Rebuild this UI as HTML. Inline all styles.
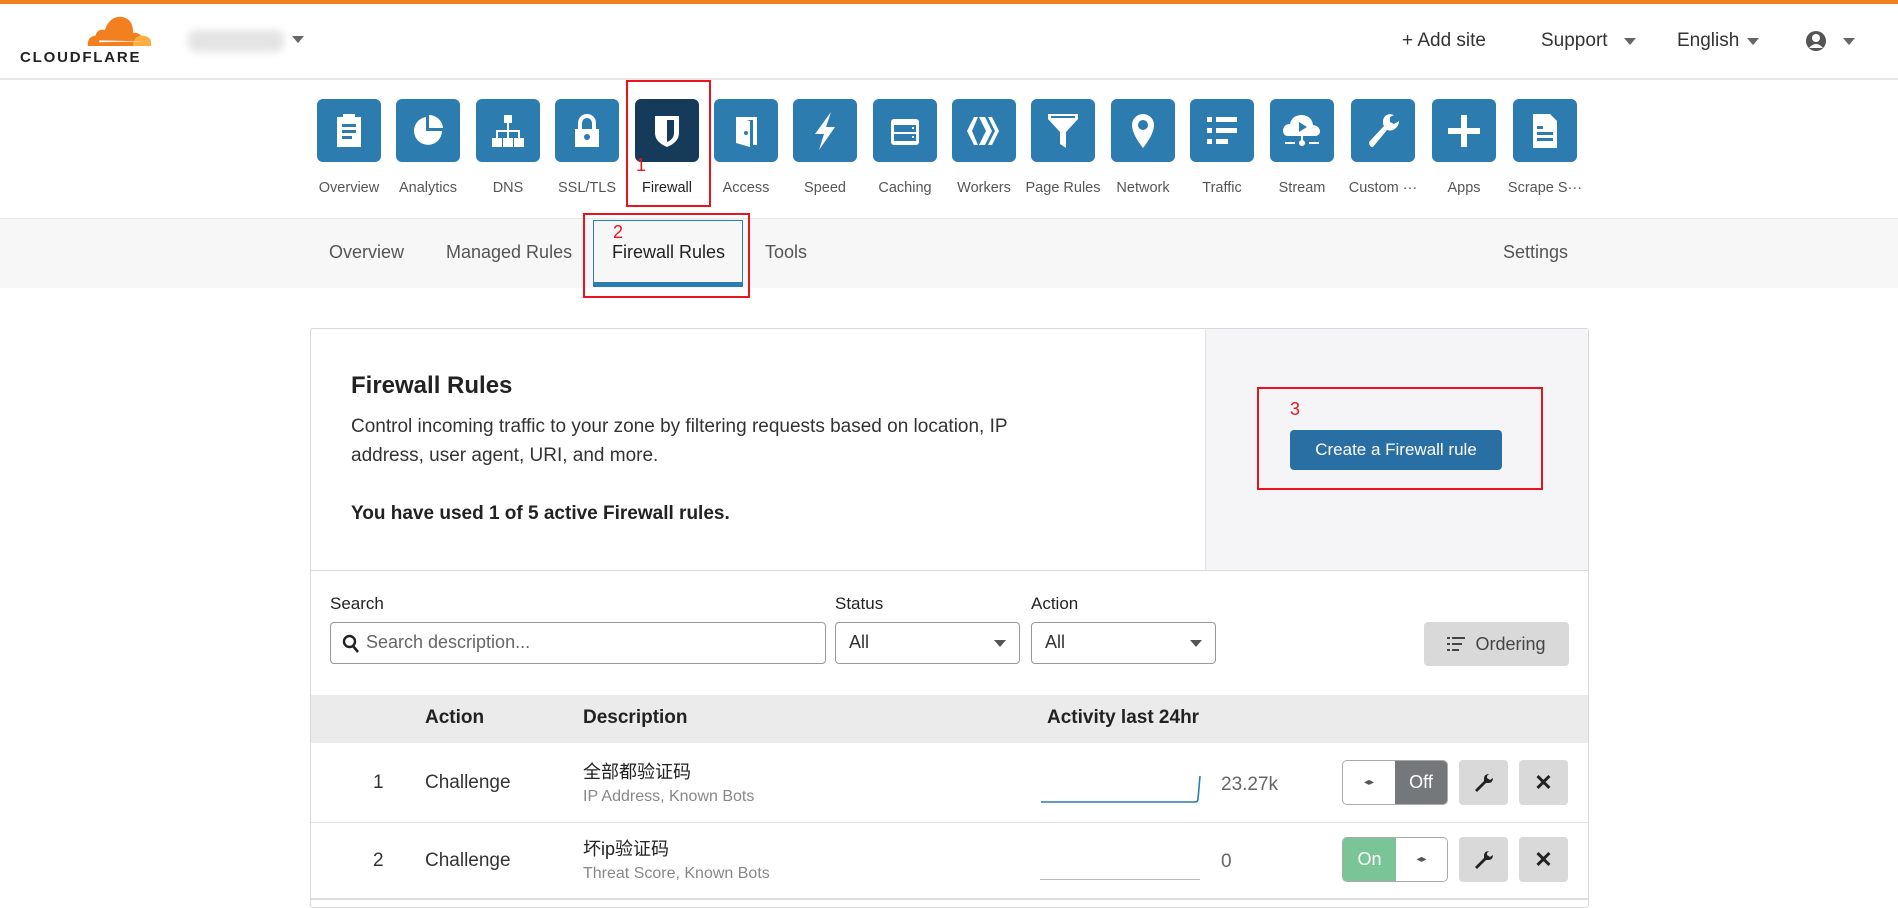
<!DOCTYPE html>
<html><head><meta charset="utf-8">
<style>
*{box-sizing:border-box;margin:0;padding:0}
body{width:1898px;height:900px;overflow:hidden;background:#fff;font-family:"Liberation Sans","Noto Sans CJK SC",sans-serif;color:#333;position:relative}
.a{position:absolute}
.ic{position:absolute;top:99px;width:64px;height:63px;border-radius:6px;background:#2c7cb0;display:flex;align-items:center;justify-content:center}
.lb{position:absolute;top:180px;width:80px;text-align:center;font-size:14.5px;color:#555;white-space:nowrap}
.red{position:absolute;border:2px solid #e8151f}
.rn{position:absolute;color:#e8151f;font-size:18px}
.tab{position:absolute;top:242px;font-size:18px;color:#555}
.btn{position:absolute;background:#d9d9d9;border-radius:4px;display:flex;align-items:center;justify-content:center}
</style></head><body>
<div class="a" style="left:0;top:0;width:1898px;height:4px;background:#f38020"></div>
<!-- logo -->
<svg class="a" style="left:86px;top:14px" width="66" height="32" viewBox="0 0 70 34"><path d="M2 34 Q1 24 10 23 Q12 15 20 17 Q25 2 38 3 Q50 5 50 20 Q58 19 60 27 L60 34Z" fill="#f38020"/><path d="M50 34 Q50 24 59 23 Q67 23 69 29 L69 34Z" fill="#faae40"/><path d="M14 30 L62 29 L14 28Z" fill="#fff"/></svg>
<div class="a" style="left:20px;top:49px;font-size:15px;font-weight:bold;letter-spacing:1.8px;color:#222">CLOUDFLARE</div>
<div class="a" style="left:188px;top:30px;width:96px;height:22px;background:#e4e4e4;border-radius:8px;filter:blur(4px)"></div>
<div class="a" style="left:292px;top:36px;width:0;height:0;border-left:6px solid transparent;border-right:6px solid transparent;border-top:7px solid #666"></div>
<div class="a" style="left:1402px;top:30px;font-size:19px;color:#333">+ Add site</div>
<div class="a" style="left:1541px;top:30px;font-size:19px;color:#333">Support</div>
<div class="a" style="left:1624px;top:38px;border-left:6px solid transparent;border-right:6px solid transparent;border-top:7px solid #666"></div>
<div class="a" style="left:1677px;top:30px;font-size:19px;color:#333">English</div>
<div class="a" style="left:1747px;top:38px;border-left:6px solid transparent;border-right:6px solid transparent;border-top:7px solid #666"></div>
<svg class="a" style="left:1805px;top:29px" width="22" height="24" viewBox="0 0 22 24"><circle cx="11" cy="12" r="10" fill="#555"/><circle cx="11" cy="9" r="4" fill="#fff"/><path d="M4 19 Q11 11 18 19Z" fill="#fff"/></svg>
<div class="a" style="left:1843px;top:38px;border-left:6px solid transparent;border-right:6px solid transparent;border-top:7px solid #666"></div>
<div class="a" style="left:0;top:78px;width:1898px;height:2px;background:#e6e6e6"></div>

<!-- icons -->
<div class="ic" style="left:317px"><svg width="30" height="36"><rect x="3" y="4" width="24" height="30" fill="#fff"/><rect x="9" y="1" width="12" height="5" fill="#fff"/><g fill="#2c7cb0"><rect x="8" y="11" width="14" height="3"/><rect x="8" y="17" width="14" height="3"/><rect x="8" y="23" width="10" height="3"/></g></svg></div>
<div class="ic" style="left:396px"><svg width="36" height="36"><path d="M16 4 A14 14 0 1 0 32 18 L16 18Z" fill="#fff"/><path d="M19 2 A14 14 0 0 1 33 15 L19 15Z" fill="#fff"/></svg></div>
<div class="ic" style="left:476px"><svg width="36" height="36" fill="#fff"><rect x="14" y="2" width="8" height="8"/><rect x="17" y="10" width="2" height="8"/><rect x="6" y="17" width="24" height="2"/><rect x="6" y="17" width="2" height="8"/><rect x="28" y="17" width="2" height="8"/><rect x="17" y="17" width="2" height="8"/><rect x="2" y="25" width="10" height="9"/><rect x="13" y="25" width="10" height="9"/><rect x="24" y="25" width="10" height="9"/></svg></div>
<div class="ic" style="left:555px"><svg width="30" height="36"><path d="M8 16 V10 A7 7 0 0 1 22 10 V16" stroke="#fff" stroke-width="4" fill="none"/><rect x="3" y="16" width="24" height="18" fill="#fff"/><circle cx="15" cy="24" r="3" fill="#2c7cb0"/></svg></div>
<div class="ic" style="left:635px;background:#163a59"><svg width="30" height="36"><path d="M3 3 H27 V20 Q27 29 15 34 Q3 29 3 20Z" fill="#fff"/><path d="M15 7 H22 V20 Q22 26 15 29Z" fill="#163a59"/></svg></div>
<div class="ic" style="left:714px"><svg width="30" height="36"><path d="M5 4 H26 V32 H22 V7 H5Z" fill="#fff"/><path d="M5 4 L19 8 V34 L5 30Z" fill="#fff"/><circle cx="15" cy="20" r="2" fill="#2c7cb0"/></svg></div>
<div class="ic" style="left:793px"><svg width="30" height="40"><path d="M21 1 L5 23 H14 L9 39 L25 16 H16Z" fill="#fff"/></svg></div>
<div class="ic" style="left:873px"><svg width="34" height="36"><rect x="3" y="6" width="28" height="26" rx="3" fill="#fff"/><rect x="6" y="12" width="22" height="7" fill="#2c7cb0"/><rect x="6" y="21" width="22" height="7" fill="#2c7cb0"/><rect x="24" y="14" width="2" height="2" fill="#fff"/><rect x="24" y="23" width="2" height="2" fill="#fff"/></svg></div>
<div class="ic" style="left:952px"><svg width="40" height="36" fill="#fff"><path d="M10 4 L3 18 L10 32 H14 L8 18 L14 4Z"/><path d="M15 4 H21 L28 18 L21 32 H15 L22 18Z"/><path d="M24 4 H28 L35 18 L28 32 H24 L31 18Z"/></svg></div>
<div class="ic" style="left:1031px"><svg width="34" height="38" fill="#fff"><path d="M2 2 H32 V7 L20 20 V36 L14 32 V20 L2 7Z"/><rect x="5" y="4" width="24" height="2" fill="#2c7cb0"/></svg></div>
<div class="ic" style="left:1111px"><svg width="28" height="38"><path d="M14 2 A11 11 0 0 1 25 13 Q25 22 14 36 Q3 22 3 13 A11 11 0 0 1 14 2Z" fill="#fff"/><circle cx="14" cy="13" r="5" fill="#2c7cb0"/></svg></div>
<div class="ic" style="left:1190px"><svg width="34" height="34" fill="#fff"><rect x="2" y="3" width="5" height="5"/><rect x="11" y="3" width="21" height="5"/><rect x="2" y="14" width="5" height="5"/><rect x="11" y="14" width="21" height="5"/><rect x="2" y="25" width="5" height="5"/><rect x="11" y="25" width="12" height="5"/></svg></div>
<div class="ic" style="left:1270px"><svg width="40" height="38"><path d="M6 24 Q1 24 1 18 Q2 12 8 12 Q10 3 20 3 Q30 4 31 13 Q38 14 38 20 Q37 24 33 24Z" fill="#fff"/><path d="M17 10 L25 15 L17 20Z" fill="#2c7cb0"/><rect x="3" y="30" width="10" height="2" fill="#fff"/><rect x="27" y="30" width="10" height="2" fill="#fff"/><circle cx="20" cy="31" r="3" fill="#fff"/><rect x="19" y="22" width="2" height="8" fill="#fff"/></svg></div>
<div class="ic" style="left:1351px"><svg width="36" height="38"><path d="M25 2 Q18 3 18 10 Q18 13 19 14 L4 30 Q4 35 8 35 L22 18 Q25 19 28 18 Q34 15 34 9 L29 12 L25 10 L25 5 L29 3Z" fill="#fff"/></svg></div>
<div class="ic" style="left:1432px"><svg width="34" height="34" fill="#fff"><rect x="14" y="1" width="6" height="32"/><rect x="1" y="14" width="32" height="6"/></svg></div>
<div class="ic" style="left:1513px"><svg width="30" height="38"><path d="M3 2 H20 L27 9 V36 H3Z" fill="#fff"/><g fill="#2c7cb0"><rect x="7" y="14" width="6" height="3"/><rect x="7" y="20" width="16" height="3"/><rect x="7" y="26" width="16" height="3"/></g></svg></div>

<div class="lb" style="left:309px">Overview</div>
<div class="lb" style="left:388px">Analytics</div>
<div class="lb" style="left:468px">DNS</div>
<div class="lb" style="left:547px">SSL/TLS</div>
<div class="lb" style="left:627px;color:#222">Firewall</div>
<div class="lb" style="left:706px">Access</div>
<div class="lb" style="left:785px">Speed</div>
<div class="lb" style="left:865px">Caching</div>
<div class="lb" style="left:944px">Workers</div>
<div class="lb" style="left:1023px">Page Rules</div>
<div class="lb" style="left:1103px">Network</div>
<div class="lb" style="left:1182px">Traffic</div>
<div class="lb" style="left:1262px">Stream</div>
<div class="lb" style="left:1343px">Custom ···</div>
<div class="lb" style="left:1424px">Apps</div>
<div class="lb" style="left:1505px">Scrape S···</div>
<div class="red" style="left:626px;top:80px;width:85px;height:127px"></div>
<div class="rn" style="left:636px;top:155px">1</div>

<!-- subnav -->
<div class="a" style="left:0;top:218px;width:1898px;height:70px;background:#f7f7f8;border-top:1px solid #e6e6e6"></div>
<div class="a" style="left:593px;top:220px;width:150px;height:67px;background:#f7f7f8;border:1px solid #2c7cb0;border-bottom:5px solid #2c7cb0"></div>
<div class="tab" style="left:329px">Overview</div>
<div class="tab" style="left:446px">Managed Rules</div>
<div class="tab" style="left:612px;color:#222">Firewall Rules</div>
<div class="tab" style="left:765px">Tools</div>
<div class="tab" style="left:1503px">Settings</div>
<div class="red" style="left:583px;top:213px;width:167px;height:85px"></div>
<div class="rn" style="left:613px;top:222px">2</div>

<!-- card -->
<div class="a" style="left:310px;top:328px;width:1279px;height:580px;border:1px solid #d9d9d9;border-radius:3px"></div>
<div class="a" style="left:1205px;top:329px;width:383px;height:241px;background:#f5f5f7;border-left:1px solid #e0e0e0"></div>
<div class="a" style="left:311px;top:570px;width:1277px;height:1px;background:#d9d9d9"></div>
<div class="a" style="left:351px;top:372px;font-size:24px;font-weight:bold;color:#222">Firewall Rules</div>
<div class="a" style="left:351px;top:412px;width:718px;font-size:19px;line-height:29px;color:#333">Control incoming traffic to your zone by filtering requests based on location, IP address, user agent, URI, and more.</div>
<div class="a" style="left:351px;top:503px;font-size:19px;font-weight:bold;color:#222">You have used 1 of 5 active Firewall rules.</div>
<div class="a" style="left:1290px;top:430px;width:212px;height:40px;background:#2a6fa3;border-radius:4px;color:#fff;font-size:17px;display:flex;align-items:center;justify-content:center">Create a Firewall rule</div>
<div class="red" style="left:1257px;top:387px;width:286px;height:103px"></div>
<div class="rn" style="left:1290px;top:399px">3</div>

<!-- filters -->
<div class="a" style="left:330px;top:594px;font-size:17px;color:#222">Search</div>
<div class="a" style="left:835px;top:594px;font-size:17px;color:#222">Status</div>
<div class="a" style="left:1031px;top:594px;font-size:17px;color:#222">Action</div>
<div class="a" style="left:330px;top:622px;width:496px;height:42px;border:1px solid #999;border-radius:4px"></div>
<svg class="a" style="left:342px;top:634px" width="18" height="20"><circle cx="7.5" cy="7.5" r="5.5" stroke="#222" stroke-width="2.4" fill="none"/><path d="M11 12 L16 18" stroke="#222" stroke-width="2.6"/></svg>
<div class="a" style="left:366px;top:632px;font-size:18px;color:#666">Search description...</div>
<div class="a" style="left:835px;top:622px;width:185px;height:42px;border:1px solid #999;border-radius:4px"></div>
<div class="a" style="left:849px;top:632px;font-size:18px;color:#333">All</div>
<div class="a" style="left:994px;top:640px;border-left:6px solid transparent;border-right:6px solid transparent;border-top:7px solid #555"></div>
<div class="a" style="left:1031px;top:622px;width:185px;height:42px;border:1px solid #999;border-radius:4px"></div>
<div class="a" style="left:1045px;top:632px;font-size:18px;color:#333">All</div>
<div class="a" style="left:1190px;top:640px;border-left:6px solid transparent;border-right:6px solid transparent;border-top:7px solid #555"></div>
<div class="btn" style="left:1424px;top:622px;width:145px;height:44px;font-size:18px;color:#444"><svg width="18" height="16" style="margin-right:10px" fill="#444"><rect x="0" y="1" width="3" height="2"/><rect x="5" y="1" width="13" height="2"/><rect x="0" y="7" width="3" height="2"/><rect x="5" y="7" width="10" height="2"/><rect x="0" y="13" width="3" height="2"/><rect x="5" y="13" width="7" height="2"/></svg>Ordering</div>

<!-- table -->
<div class="a" style="left:311px;top:695px;width:1277px;height:48px;background:#ebebeb"></div>
<div class="a" style="left:425px;top:707px;font-size:19px;font-weight:bold;color:#222">Action</div>
<div class="a" style="left:583px;top:707px;font-size:19px;font-weight:bold;color:#222">Description</div>
<div class="a" style="left:1047px;top:707px;font-size:19px;font-weight:bold;color:#222">Activity last 24hr</div>
<div class="a" style="left:311px;top:822px;width:1277px;height:1px;background:#e3e3e3"></div>

<div class="a" style="left:373px;top:772px;font-size:19px">1</div>
<div class="a" style="left:425px;top:772px;font-size:19px">Challenge</div>
<div class="a" style="left:583px;top:758px;font-size:18px;color:#222">全部都验证码</div>
<div class="a" style="left:583px;top:788px;font-size:16px;color:#888">IP Address, Known Bots</div>
<svg class="a" style="left:1040px;top:765px" width="162" height="40"><path d="M1 37 H155 Q158 37 158 34 L160 11" stroke="#2c7cb0" stroke-width="1.6" fill="none"/></svg>
<div class="a" style="left:1221px;top:774px;font-size:19px;color:#666">23.27k</div>
<div class="a" style="left:1342px;top:760px;width:106px;height:45px;border:1px solid #aaa;border-radius:5px;overflow:hidden;display:flex"><div style="width:52px;background:#fff;display:flex;align-items:center;justify-content:center;font-size:10px;color:#555">◂▸</div><div style="flex:1;background:#74787b;color:#fff;font-size:18px;display:flex;align-items:center;justify-content:center">Off</div></div>
<div class="btn" style="left:1459px;top:760px;width:49px;height:45px"><svg width="20" height="20"><path d="M15 1 Q10 1 10 6 L10 8 L1 17 L3 19 L12 10 L14 10 Q19 10 19 5 L16 7 L13 5 L13 3Z" fill="#222"/></svg></div>
<div class="btn" style="left:1519px;top:760px;width:49px;height:45px;font-size:22px;font-weight:bold;color:#222">✕</div>

<div class="a" style="left:373px;top:850px;font-size:19px">2</div>
<div class="a" style="left:425px;top:850px;font-size:19px">Challenge</div>
<div class="a" style="left:583px;top:835px;font-size:18px;color:#222">坏ip验证码</div>
<div class="a" style="left:583px;top:865px;font-size:16px;color:#888">Threat Score, Known Bots</div>
<div class="a" style="left:1040px;top:879px;width:160px;height:1px;background:#bbb"></div>
<div class="a" style="left:1221px;top:851px;font-size:19px;color:#666">0</div>
<div class="a" style="left:1342px;top:837px;width:106px;height:45px;border:1px solid #aaa;border-radius:5px;overflow:hidden;display:flex"><div style="width:53px;background:#79c597;color:#fff;font-size:18px;display:flex;align-items:center;justify-content:center">On</div><div style="flex:1;background:#fff;display:flex;align-items:center;justify-content:center;font-size:10px;color:#555">◂▸</div></div>
<div class="btn" style="left:1459px;top:837px;width:49px;height:45px"><svg width="20" height="20"><path d="M15 1 Q10 1 10 6 L10 8 L1 17 L3 19 L12 10 L14 10 Q19 10 19 5 L16 7 L13 5 L13 3Z" fill="#222"/></svg></div>
<div class="btn" style="left:1519px;top:837px;width:49px;height:45px;font-size:22px;font-weight:bold;color:#222">✕</div>
<div class="a" style="left:311px;top:898px;width:1277px;height:2px;background:#ddd"></div>
</body></html>
